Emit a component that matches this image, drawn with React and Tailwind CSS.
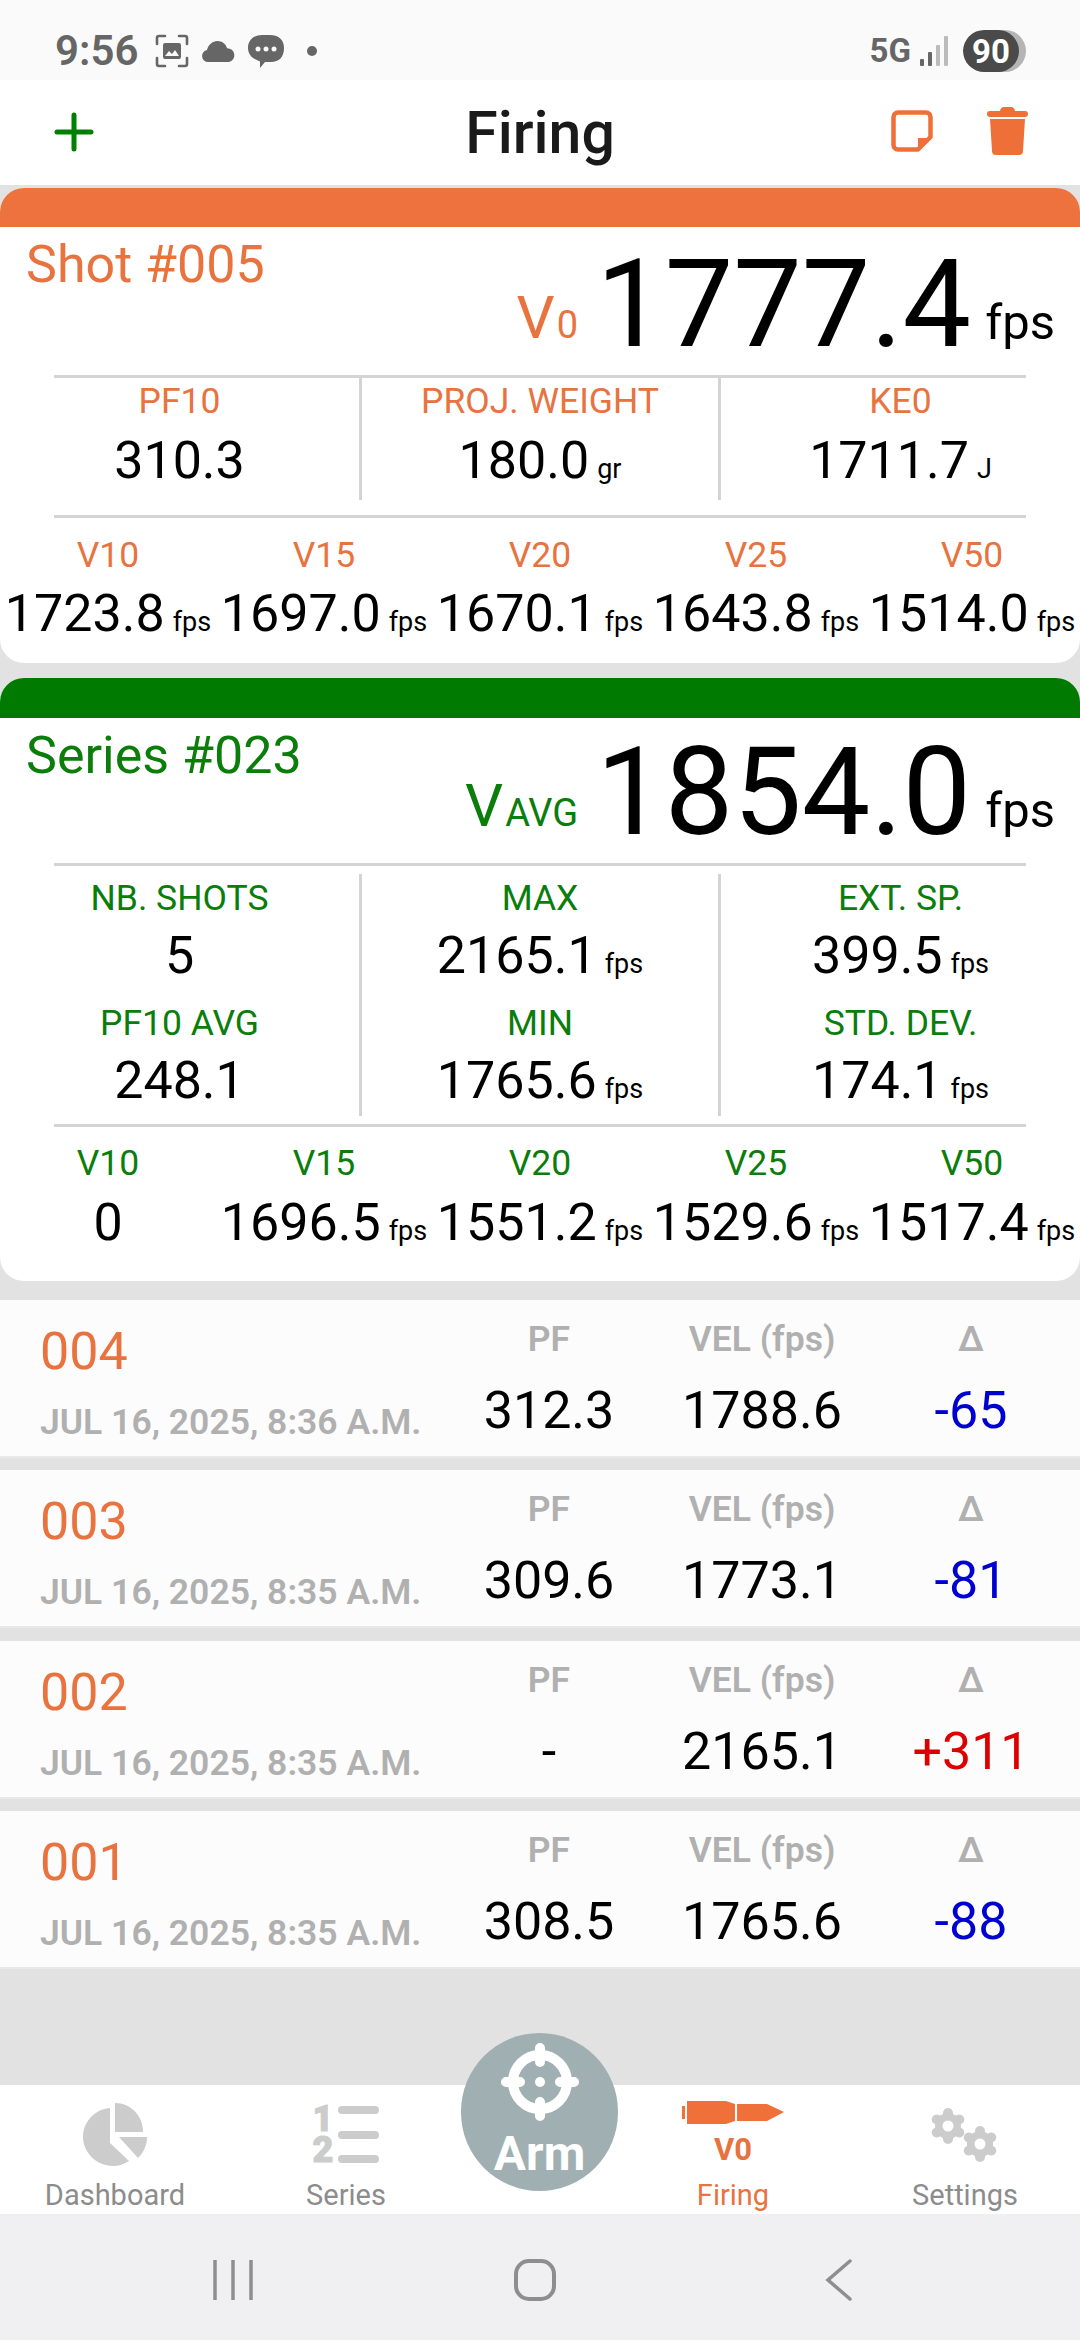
import React from 'react';

const ORANGE = 'text-[#e8733f]';
const GREEN = 'text-[#0b7d0b]';

const shotStats = [
  [{ label: 'PF10', value: '310.3' }],
  [{ label: 'PROJ. WEIGHT', value: '180.0', unit: 'gr' }],
  [{ label: 'KE0', value: '1711.7', unit: 'J' }],
];

const seriesStats = [
  [{ label: 'NB. SHOTS', value: '5' }, { label: 'PF10 AVG', value: '248.1' }],
  [{ label: 'MAX', value: '2165.1', unit: 'fps' }, { label: 'MIN', value: '1765.6', unit: 'fps' }],
  [{ label: 'EXT. SP.', value: '399.5', unit: 'fps' }, { label: 'STD. DEV.', value: '174.1', unit: 'fps' }],
];

const shotSpeeds = [
  { label: 'V10', value: '1723.8', unit: 'fps' },
  { label: 'V15', value: '1697.0', unit: 'fps' },
  { label: 'V20', value: '1670.1', unit: 'fps' },
  { label: 'V25', value: '1643.8', unit: 'fps' },
  { label: 'V50', value: '1514.0', unit: 'fps' },
];

const seriesSpeeds = [
  { label: 'V10', value: '0' },
  { label: 'V15', value: '1696.5', unit: 'fps' },
  { label: 'V20', value: '1551.2', unit: 'fps' },
  { label: 'V25', value: '1529.6', unit: 'fps' },
  { label: 'V50', value: '1517.4', unit: 'fps' },
];

const shots = [
  { id: '004', date: 'JUL 16, 2025, 8:36 A.M.', pf: '312.3', vel: '1788.6', delta: '-65', up: false },
  { id: '003', date: 'JUL 16, 2025, 8:35 A.M.', pf: '309.6', vel: '1773.1', delta: '-81', up: false },
  { id: '002', date: 'JUL 16, 2025, 8:35 A.M.', pf: '-', vel: '2165.1', delta: '+311', up: true },
  { id: '001', date: 'JUL 16, 2025, 8:35 A.M.', pf: '308.5', vel: '1765.6', delta: '-88', up: false },
];

const Gear = ({ cx, cy }) => (
  <g>
    {[0, 60, 120].map((a) => (
      <line key={a} x1={cx} y1={cy - 13} x2={cx} y2={cy + 13} stroke="#cccccc" strokeWidth="10" strokeLinecap="round" transform={`rotate(${a} ${cx} ${cy})`} />
    ))}
    <circle cx={cx} cy={cy} r="13" fill="#cccccc" />
    <circle cx={cx} cy={cy} r="5.5" fill="#ffffff" />
  </g>
);

const StatusIcons = () => (
  <div className="flex items-center ml-[17px]">
    <svg width="34" height="34" viewBox="0 0 34 34" fill="none">
      <path d="M2 10V4a2 2 0 0 1 2-2h6M24 2h6a2 2 0 0 1 2 2v6M32 24v6a2 2 0 0 1-2 2h-6M10 32H4a2 2 0 0 1-2-2v-6" stroke="#666" strokeWidth="2.6" strokeLinecap="round" />
      <rect x="8" y="9" width="18" height="16" rx="2" fill="#666" />
      <path d="M10 22l4-5 3 3 3-4 4 6z" fill="#fafafa" />
    </svg>
    <svg className="ml-[12px]" width="35" height="21" viewBox="0 0 35 21" fill="#666">
      <path d="M7 21a6 6 0 0 1-1-11.9C7 4 11.5 0 16.5 0c4.5 0 8.4 2.8 9.6 7.2A7 7 0 0 1 28 21z" />
    </svg>
    <svg className="ml-[12px]" width="36" height="36" viewBox="0 0 36 36">
      <path d="M14 2h8c8 0 14 4 14 13s-5 14-13 14h-6l-5 6 0-6.500C5 26 0 22 0 15 0 7 6 2 14 2z" fill="#666" />
      <circle cx="10" cy="16" r="2.500" fill="#fafafa" />
      <circle cx="18" cy="16" r="2.500" fill="#fafafa" />
      <circle cx="26" cy="16" r="2.500" fill="#fafafa" />
    </svg>
    <div className="ml-[23px] w-[10px] h-[10px] rounded-full bg-[#666]" />
  </div>
);

const StatusBar = () => (
  <div className="h-[80px] bg-[#fafafa] flex items-center justify-between pl-[55px] pr-[54px] pt-[22px] text-[#666]">
    <div className="flex items-center">
      <span className="text-[42px] leading-[44px] font-semibold">9:56</span>
      <StatusIcons />
    </div>
    <div className="flex items-center">
      <span className="text-[33px] leading-[40px] font-bold">5G</span>
      <svg className="ml-[9px]" width="28" height="30" viewBox="0 0 28 30">
        <rect x="0" y="23" width="4" height="7" rx="1" fill="#666" />
        <rect x="8" y="16" width="4" height="14" rx="1" fill="#666" />
        <rect x="16" y="9" width="4" height="21" rx="1" fill="#bbb" />
        <rect x="24" y="0" width="4" height="30" rx="1" fill="#bbb" />
      </svg>
      <div className="ml-[15px] w-[63px] h-[42px] rounded-full bg-[#b5b5b5] overflow-hidden">
        <div className="w-[56px] h-full rounded-full bg-[#4a4a4a] flex items-center justify-center text-white text-[33px] leading-none font-bold">90</div>
      </div>
    </div>
  </div>
);

const Header = () => (
  <div className="h-[105px] bg-white grid grid-cols-3 items-center">
    <svg className="ml-[54px] -mt-[2px]" width="40" height="40" viewBox="0 0 40 40" stroke="#008000" strokeWidth="5" strokeLinecap="round">
      <path d="M20 3v34M3 20h34" />
    </svg>
    <div className="text-center text-[59px] leading-[70px] font-medium text-[#1a1a1a] mt-[1px]">Firing</div>
    <div className="flex justify-end items-center pr-[52px] gap-[54px] -mt-[3px]">
      <svg width="42" height="42" viewBox="0 0 42 42" fill="none">
        <path d="M7 2.500h28a4.500 4.500 0 0 1 4.500 4.500v20L27 39.500H7A4.500 4.500 0 0 1 2.500 35V7A4.500 4.500 0 0 1 7 2.500z" stroke="#ee7038" strokeWidth="4.500" strokeLinejoin="round" />
        <path d="M27 28h12L27 40z" fill="#ee7038" />
      </svg>
      <svg width="41" height="48" viewBox="0 0 41 48" fill="#ee7038">
        <path d="M13 4c0-2 2-4 4-4h7c2 0 4 2 4 4h10a3 3 0 0 1 0 6H3a3 3 0 0 1 0-6z" />
        <path d="M3 12h35l-2 32a4 4 0 0 1-4 4H9a4 4 0 0 1-4-4z" />
      </svg>
    </div>
  </div>
);

const Value = ({ value, unit }) => (
  <div className="text-[52px] leading-[60px] text-black whitespace-nowrap">
    {value}
    {unit && <span className="text-[27px] leading-none ml-[8px]">{unit}</span>}
  </div>
);

const Rule = () => <div className="mx-[54px] h-[3px] bg-[#d4d4d4]" />;

const StatGrid = ({ columns, color, valueGap, colClass }) => (
  <div className="grid grid-cols-[359px_362px_359px]">
    {columns.map((col, i) => (
      <div key={i} className={`flex flex-col ${colClass} ${i === 1 ? 'border-x-[3px] border-[#d4d4d4]' : ''}`}>
        {col.map((s) => (
          <div key={s.label} className="flex flex-col items-center">
            <div className={`text-[35.5px] leading-[40px] ${color}`}>{s.label}</div>
            <div className={valueGap}><Value value={s.value} unit={s.unit} /></div>
          </div>
        ))}
      </div>
    ))}
  </div>
);

const Speeds = ({ items, color, gap }) => (
  <div className="grid grid-cols-5">
    {items.map((s) => (
      <div key={s.label} className="flex flex-col items-center">
        <div className={`text-[35.5px] leading-[40px] ${color}`}>{s.label}</div>
        <div className={gap}><Value value={s.value} unit={s.unit} /></div>
      </div>
    ))}
  </div>
);

const BigRow = ({ title, symbol, sub, value, color, top }) => (
  <div className={`flex justify-between ${top}`}>
    <div className={`pl-[26px] pt-[10px] text-[52px] leading-[56px] ${color}`}>{title}</div>
    <div className="self-end mb-[9px] pr-[25px] whitespace-nowrap text-[122px] leading-[122px] text-black">
      <span className={`text-[60px] leading-none align-[8px] ${color}`}>
        {symbol}
        <span className="text-[38px] leading-none ml-[2px]">{sub}</span>
      </span>
      <span className="ml-[18px]">{value}</span>
      <span className="text-[49px] leading-none ml-[14px] align-[7px]">fps</span>
    </div>
  </div>
);

const ShotRow = ({ shot }) => (
  <div className="h-[158px] bg-[#fcfcfc] border-b-[2px] border-[#e9e9e9] flex">
    <div className="w-[440px] pl-[40px] pt-[27px]">
      <div className={`text-[52px] leading-[50px] ${ORANGE}`}>{shot.id}</div>
      <div className="mt-[25px] text-[35.5px] leading-[40px] font-semibold text-[#b0b0b0] whitespace-nowrap">{shot.date}</div>
    </div>
    {[
      { label: 'PF', value: shot.pf, w: 'w-[218px]', cls: 'text-black' },
      { label: 'VEL (fps)', value: shot.vel, w: 'w-[208px]', cls: 'text-black' },
      { label: 'Δ', value: shot.delta, w: 'w-[210px]', cls: shot.up ? 'text-[#dd0000]' : 'text-[#0000d0]' },
    ].map((c) => (
      <div key={c.label} className={`${c.w} pt-[19px] flex flex-col items-center`}>
        <div className="text-[35.5px] leading-[40px] font-semibold text-[#b0b0b0]">{c.label}</div>
        <div className={`mt-[22px] text-[52px] leading-[60px] ${c.cls}`}>{c.value}</div>
      </div>
    ))}
  </div>
);

const NavLabel = ({ children, active }) => (
  <div className={`text-[29px] leading-[36px] ${active ? 'text-[#e8733f]' : 'text-[#8c8c8c]'}`}>{children}</div>
);

const BottomNav = () => (
  <div className="relative h-[129px] bg-white grid grid-cols-[230px_232px_154px_234px_230px]">
    <div className="flex flex-col items-center pt-[18px]">
      <svg width="64" height="63" viewBox="0 0 64 63" fill="#cccccc">
        <path d="M27 5v35l19 18C41 61 36 63 30 63 13 63 0 49 0 34 0 19 12 6 27 5z" />
        <path d="M32 0c16 0 28 13 28 29H32z" />
        <path d="M36 34h28c0 9-4 16-9 21z" />
      </svg>
      <div className="mt-[11px]"><NavLabel>Dashboard</NavLabel></div>
    </div>
    <div className="flex flex-col items-center pt-[19px]">
      <div className="h-[61px] flex items-stretch gap-[5px]">
        <div className="flex flex-col justify-between text-[#cccccc] text-[36px] leading-[30px] font-black [-webkit-text-stroke:1px_#cccccc]">
          <span>1</span>
          <span>2</span>
        </div>
        <div className="flex flex-col justify-between py-[2px] w-[41px]">
          <div className="h-[8px] rounded-full bg-[#cccccc]" />
          <div className="h-[8px] rounded-full bg-[#cccccc]" />
          <div className="h-[8px] rounded-full bg-[#cccccc]" />
        </div>
      </div>
      <div className="mt-[12px]"><NavLabel>Series</NavLabel></div>
    </div>
    <div />
    <div className="flex flex-col items-center pt-[15px]">
      <svg width="102" height="24" viewBox="0 0 102 24" fill="#f0703a">
        <rect x="0" y="6" width="3" height="13" />
        <path d="M5 1h39l9 3v17l-9 3H5z" />
        <path d="M55 4h30l17 8-17 9H55z" />
      </svg>
      <div className="text-[31px] leading-[34px] font-bold text-[#e8733f] mt-[9px]">V0</div>
      <div className="mt-[10px]"><NavLabel active>Firing</NavLabel></div>
    </div>
    <div className="flex flex-col items-center pt-[23px]">
      <svg width="68" height="54" viewBox="0 0 68 54">
        <Gear cx={17} cy={18} />
        <Gear cx={49} cy={36} />
      </svg>
      <div className="mt-[15px]"><NavLabel>Settings</NavLabel></div>
    </div>
    {/* floating arm button */}
    <div className="absolute left-[461px] -top-[52px] w-[157px] h-[158px] rounded-full bg-[#a0b0b2] flex flex-col items-center pt-[9px]">
      <svg width="80" height="80" viewBox="0 0 80 80" fill="none" stroke="#ffffff" strokeLinecap="round">
        <circle cx="40" cy="40" r="27" strokeWidth="10" />
        <path d="M40 6v14M40 60v14M6 40h14M60 40h14" strokeWidth="10" />
        <circle cx="40" cy="40" r="5" fill="#ffffff" stroke="none" />
      </svg>
      <div className="mt-[7px] text-[48px] leading-[50px] font-bold text-white">Arm</div>
    </div>
  </div>
);

const SystemNav = () => (
  <div className="h-[126px] bg-[#f0f0f2] flex items-center pl-[213px] pt-[6px]">
    <svg width="40" height="42" viewBox="0 0 40 42" stroke="#8e8e8e" strokeWidth="3.500">
      <path d="M2 1v40M20 1v40M38 1v40" />
    </svg>
    <svg className="ml-[261px]" width="42" height="42" viewBox="0 0 42 42" fill="none" stroke="#8e8e8e" strokeWidth="4">
      <rect x="2" y="2" width="38" height="38" rx="13" />
    </svg>
    <svg className="ml-[269px]" width="28" height="42" viewBox="0 0 28 42" fill="none" stroke="#8e8e8e" strokeWidth="3.500" strokeLinecap="round">
      <path d="M25 2L3 21l22 19" />
    </svg>
  </div>
);

export default function App() {
  return (
    <div className="w-[1080px] h-[2340px] flex flex-col bg-[#e2e2e2] overflow-hidden font-['Roboto',sans-serif]">
      <StatusBar />
      <Header />
      <div className="flex-1 pt-[3px] flex flex-col">
        {/* last shot */}
        <div className="h-[475px] rounded-[24px] bg-white overflow-hidden">
          <div className="h-[39px] bg-[#ee723e]" />
          <BigRow title="Shot #005" symbol="V" sub="0" value="1777.4" color={ORANGE} top="h-[148px]" />
          <Rule />
          <StatGrid columns={shotStats} color={ORANGE} valueGap="mt-[10px]" colClass="pt-[3px] pb-[9px]" />
          <div className="mt-[15px]"><Rule /></div>
          <div className="pt-[17px]"><Speeds items={shotSpeeds} color={ORANGE} gap="mt-[9px]" /></div>
        </div>
        {/* current series */}
        <div className="mt-[15px] h-[603px] rounded-[24px] bg-white overflow-hidden">
          <div className="h-[40px] bg-[#007a00]" />
          <BigRow title="Series #023" symbol="V" sub="AVG" value="1854.0" color={GREEN} top="h-[145px]" />
          <Rule />
          <div className="mt-[8px]">
            <StatGrid columns={seriesStats} color={GREEN} valueGap="mt-[8px]" colClass="gap-[17px] pt-[4px] pb-[5px]" />
          </div>
          <div className="mt-[8px]"><Rule /></div>
          <div className="pt-[16px]"><Speeds items={seriesSpeeds} color={GREEN} gap="mt-[10px]" /></div>
        </div>
        {/* earlier shots */}
        <div className="mt-[19px] flex flex-col gap-[12.300px]">
          {shots.map((s) => <ShotRow key={s.id} shot={s} />)}
        </div>
      </div>
      <BottomNav />
      <SystemNav />
    </div>
  );
}
